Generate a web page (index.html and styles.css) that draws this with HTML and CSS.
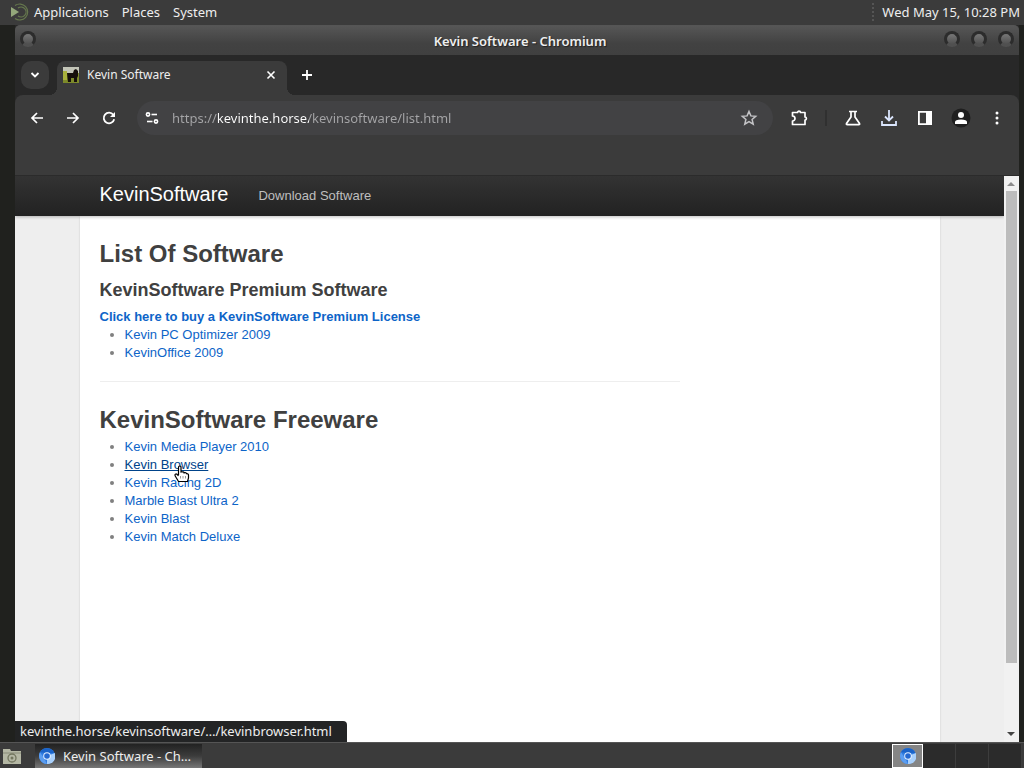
FILE: index.html
```html
<!DOCTYPE html>
<html lang="en">
<head>
    <meta charset="UTF-8">
    <meta name="viewport" content="width=device-width, initial-scale=1.0">
    <title>Kevin Software</title>
    <link rel="stylesheet" href="styles.css">
</head>
<body>
    <svg width="0" height="0" class="defs" aria-hidden="true">
        <symbol id="chromium" viewBox="0 0 16 16">
            <circle cx="8" cy="8" r="8" fill="#2f7be0"/>
            <path d="M8 8 16 5a8 8 0 0 1-8 11z" fill="#a9d0fb"/>
            <path d="M1 4.2 5 10l3 6A8 8 0 0 1 1 4.2z" fill="#5b9df0"/>
            <path d="M1 4.2A8 8 0 0 1 15.3 5H8z" fill="#1a63c8"/>
            <circle cx="8" cy="8" r="3.8" fill="#e4f0ff"/>
            <circle cx="8" cy="8" r="2.8" fill="#2568cf"/>
        </symbol>
    </svg>

    <header class="panel panel-top">
        <svg class="menu-logo" width="20" height="18" viewBox="0 0 20 18">
            <path d="M1 4v10l8-5z" fill="#93a77a"/>
            <path d="M5 2.5a8 8 0 1 1 0 13M8 5a5 5 0 1 1 0 8" fill="none" stroke="#66784e" stroke-width="1.2"/>
        </svg>
        <button class="menu">Applications</button>
        <button class="menu">Places</button>
        <button class="menu">System</button>
        <span class="grip"></span>
        <time class="clock">Wed May 15, 10:28 PM</time>
    </header>

    <main class="desktop">
        <section class="window">
            <div class="titlebar">
                <button class="orb" aria-label="Window menu"></button>
                <h1 class="window-title">Kevin Software - Chromium</h1>
                <div class="orbs">
                    <button class="orb" aria-label="Minimize"></button>
                    <button class="orb" aria-label="Maximize"></button>
                    <button class="orb" aria-label="Close"></button>
                </div>
            </div>

            <div class="tabstrip">
                <button class="tab-search" aria-label="Search tabs">
                    <svg width="10" height="8" viewBox="0 0 10 8"><path d="M1.5 2 5 5.5 8.5 2" fill="none" stroke="#fff" stroke-width="1.8"/></svg>
                </button>
                <div class="tab">
                    <svg width="16" height="16" viewBox="0 0 16 16">
                        <rect width="16" height="16" fill="#7d8a2a"/>
                        <rect width="16" height="6" fill="#c3c5b8"/>
                        <path d="M0 4h4v9H0z" fill="#a9b13c"/>
                        <path d="M4 6h6l1-3 2-1 2 2v5l-1 2v4h-3v-4H8v4H5z" fill="#160f0b"/>
                    </svg>
                    <span class="tab-title">Kevin Software</span>
                    <button class="icon-btn tab-close" aria-label="Close tab">
                        <svg width="10" height="10" viewBox="0 0 10 10"><path d="M1.5 1.5l7 7M8.5 1.5l-7 7" stroke="#fff" stroke-width="1.6"/></svg>
                    </button>
                </div>
                <button class="icon-btn new-tab" aria-label="New tab">
                    <svg width="12" height="12" viewBox="0 0 12 12"><path d="M6 1v10M1 6h10" stroke="#fff" stroke-width="1.8"/></svg>
                </button>
            </div>

            <div class="toolbar">
                <button class="icon-btn" aria-label="Back">
                    <svg width="16" height="16" viewBox="0 0 16 16"><path d="M14 8H3.500M8 3 3 8l5 5" fill="none" stroke="#fff" stroke-width="1.7"/></svg>
                </button>
                <button class="icon-btn" aria-label="Forward">
                    <svg width="16" height="16" viewBox="0 0 16 16"><path d="M2 8h10.500M8 3l5 5-5 5" fill="none" stroke="#fff" stroke-width="1.7"/></svg>
                </button>
                <button class="icon-btn" aria-label="Reload">
                    <svg width="16" height="16" viewBox="0 0 16 16"><path d="M13.200 9.200A5.300 5.300 0 1 1 12.300 4.800" fill="none" stroke="#fff" stroke-width="1.800"/><path d="M14 2v5H9z" fill="#fff"/></svg>
                </button>
                <div class="omnibox">
                    <svg width="16" height="16" viewBox="0 0 16 16" fill="none" stroke="#fff" stroke-width="1.600">
                        <circle cx="4" cy="4.500" r="1.600"/><path d="M7.500 4.500H13"/>
                        <circle cx="12" cy="11.500" r="1.600"/><path d="M3 11.500h5.500"/>
                    </svg>
                    <input class="url" type="text" value="https://kevinthe.horse/kevinsoftware/list.html" aria-label="Address">
                    <button class="icon-btn" aria-label="Bookmark this page">
                        <svg width="18" height="18" viewBox="0 0 18 18"><path d="M9 2.500l1.900 4.400 4.800.4-3.600 3.200 1.100 4.700L9 12.700l-4.200 2.500 1.100-4.700L2.300 7.300l4.800-.4z" fill="none" stroke="#c4c4c7" stroke-width="1.500"/></svg>
                    </button>
                </div>
                <div class="actions">
                    <button class="icon-btn" aria-label="Extensions">
                        <svg width="18" height="18" viewBox="0 0 18 18"><path d="M2.500 3.500H7.500a1.500 1.300 0 0 1 3 0h4.500V8a1.400 1.500 0 0 1 0 3v4.500H2.500V12a2.300 2.300 0 0 0 0-5z" fill="none" stroke="#fff" stroke-width="1.700" stroke-linejoin="round"/></svg>
                    </button>
                    <span class="divider"></span>
                    <button class="icon-btn" aria-label="Experiments">
                        <svg width="18" height="18" viewBox="0 0 18 18"><path d="M5 2.500h8M7 3v5l-4.500 6.500q-.5 1.200.8 1.200h11.400q1.300 0 .8-1.200L11 8V3" fill="none" stroke="#fff" stroke-width="1.700"/></svg>
                    </button>
                    <button class="icon-btn" aria-label="Downloads">
                        <svg width="18" height="18" viewBox="0 0 18 18"><path d="M9 1v10M5 7.500l4 4 4-4M2 12v4h14v-4" fill="none" stroke="#dbe6fd" stroke-width="1.800"/></svg>
                    </button>
                    <button class="icon-btn" aria-label="Side panel">
                        <svg width="16" height="16" viewBox="0 0 16 16"><path d="M1 1h14v14H1zM2.800 2.800v10.400H9V2.800z" fill="#fff" fill-rule="evenodd"/></svg>
                    </button>
                    <button class="icon-btn" aria-label="Profile">
                        <svg width="20" height="20" viewBox="0 0 20 20"><circle cx="10" cy="10" r="9.500" fill="#1f1f1f"/><circle cx="10" cy="7" r="3" fill="#fff"/><path d="M4 16v-2q0-2.500 6-2.500t6 2.500v2z" fill="#fff"/></svg>
                    </button>
                    <button class="icon-btn" aria-label="More">
                        <svg width="16" height="16" viewBox="0 0 16 16" fill="#fff"><circle cx="8" cy="3" r="1.500"/><circle cx="8" cy="8" r="1.500"/><circle cx="8" cy="13" r="1.500"/></svg>
                    </button>
                </div>
            </div>
            <div class="bookmarks"></div>

            <div class="viewport">
                <div class="page">
                    <nav class="navbar">
                        <div class="navbar-inner">
                            <a class="brand" href="#">KevinSoftware</a>
                            <a class="nav-link" href="#">Download Software</a>
                        </div>
                    </nav>
                    <article class="content">
                        <div class="column">
                            <h2>List Of Software</h2>
                            <h3>KevinSoftware Premium Software</h3>
                            <a class="premium" href="#">Click here to buy a KevinSoftware Premium License</a>
                            <ul>
                                <li><a href="#">Kevin PC Optimizer 2009</a></li>
                                <li><a href="#">KevinOffice 2009</a></li>
                            </ul>
                            <hr>
                            <h2>KevinSoftware Freeware</h2>
                            <ul>
                                <li><a href="#">Kevin Media Player 2010</a></li>
                                <li class="hovered">
                                    <a href="#">Kevin Browser</a>
                                    <svg class="cursor" width="16" height="18" viewBox="0 0 16 18"><path d="M4.500 10V2.500q0-1.500 1.300-1.500T7 2.500V7q3-.5 3 .8 2.300-.5 2.500.9 2-.2 2 1.300v3l-1 3.500H4.500l-3-5q-1.200-2 .3-2.500 1-.3 2.700 2" fill="#fff" stroke="#000" stroke-width="1.200"/><path d="M6.500 11v2.500M9 11v2.500M11.500 11v2.500" stroke="#999"/></svg>
                                </li>
                                <li><a href="#">Kevin Racing 2D</a></li>
                                <li><a href="#">Marble Blast Ultra 2</a></li>
                                <li><a href="#">Kevin Blast</a></li>
                                <li><a href="#">Kevin Match Deluxe</a></li>
                            </ul>
                        </div>
                    </article>
                </div>
                <div class="scrollbar">
                    <svg width="14" height="15" viewBox="0 0 14 15"><path d="M3 10h8L7 6z" fill="#8b8b8b"/></svg>
                    <div class="thumb"></div>
                    <svg width="14" height="15" viewBox="0 0 14 15"><path d="M3 5h8L7 9z" fill="#444"/></svg>
                </div>
                <div class="status">kevinthe.horse/kevinsoftware/…/kevinbrowser.html</div>
            </div>
        </section>
    </main>

    <footer class="panel panel-bottom">
        <button class="icon-btn show-desktop" aria-label="Show desktop">
            <svg width="20" height="18" viewBox="0 0 20 18">
                <path d="M1 2h7l1 2h10v13H1z" fill="#b4b7a4"/>
                <path d="M1 6h18" stroke="#888b79"/>
                <circle cx="10" cy="11" r="4" fill="none" stroke="#73765f" stroke-width="1.300"/>
                <circle cx="10" cy="11" r="1.500" fill="#73765f"/>
            </svg>
        </button>
        <button class="task">
            <svg width="16" height="16"><use href="#chromium"/></svg>
            <span>Kevin Software - Ch…</span>
        </button>
        <div class="workspaces">
            <button class="workspace active" aria-label="Workspace 1"><svg width="16" height="16"><use href="#chromium"/></svg></button>
            <button class="workspace" aria-label="Workspace 2"></button>
            <button class="workspace" aria-label="Workspace 3"></button>
            <button class="workspace" aria-label="Workspace 4"></button>
        </div>
    </footer>
</body>
</html>
```
FILE: styles.css
```css
* {
    box-sizing: border-box;
}
body {
    margin: 0;
    height: 100vh;
    display: flex;
    flex-direction: column;
    overflow: hidden;
    background: #20211e;
    color: #eee;
    font: 13px/18px "Noto Sans", sans-serif;
}
button {
    padding: 0;
    border: none;
    background: none;
    color: inherit;
    font: inherit;
}
svg {
    display: block;
    flex: none;
}
.defs {
    position: absolute;
}

/* desktop panels */
.panel {
    display: flex;
    align-items: center;
    flex: none;
    background: #3b3b3b;
}
.panel-top {
    height: 25px;
    padding: 0 4px 2px 10px;
}
.menu-logo {
    margin-right: 4px;
}
.menu {
    margin-right: 13px;
}
.grip {
    height: 18px;
    margin-left: auto;
    margin-right: 8px;
    border-left: 2px dotted #555;
}
.panel-bottom {
    height: 26px;
    border-top: 1px solid #555;
    padding: 0 2px;
}
.show-desktop {
    margin-right: 13px;
}
.panel-bottom .show-desktop {
    width: 20px;
}
.task {
    display: flex;
    align-items: center;
    gap: 8px;
    width: 167px;
    height: 24px;
    padding: 0 4px;
    white-space: nowrap;
    background: linear-gradient(#222, #3c3c3c 50%, #777);
}
.workspaces {
    display: flex;
    margin-left: auto;
    height: 24px;
}
.workspace {
    display: flex;
    align-items: center;
    justify-content: center;
    width: 33px;
    background: #2b2b2b;
    border-right: 1px solid #3d3d3d;
}
.workspace.active {
    width: 31px;
    background: #858585;
    border: 1px solid #fff;
}

/* browser window */
.desktop {
    display: flex;
    flex: 1;
    min-height: 0;
    padding: 0 5px 0 15px;
}
.window {
    display: flex;
    flex-direction: column;
    flex: 1;
    min-width: 0;
    background: #282828;
}
.titlebar {
    display: flex;
    align-items: center;
    justify-content: space-between;
    flex: none;
    height: 30px;
    padding: 0 5px;
    border-top: 1px solid #555;
    border-radius: 5px 5px 0 0;
    background: linear-gradient(#565656, #424242 60%, #404040);
}
.window-title {
    margin: 0 0 0 60px;
    font-size: 13px;
    font-weight: 600;
    text-shadow: 1px 1px 1px #222;
}
.orbs {
    display: flex;
    gap: 11px;
}
.orb {
    width: 16px;
    height: 16px;
    margin-bottom: 4px;
    border: 3px solid #2c2c2c;
    border-bottom-color: #505050;
    border-radius: 50%;
    background: linear-gradient(#777, #505050);
}
.tabstrip {
    display: flex;
    align-items: center;
    flex: none;
    height: 40px;
    padding-left: 6px;
}
.tab-search {
    display: flex;
    align-items: center;
    justify-content: center;
    width: 28px;
    height: 28px;
    border-radius: 10px;
    background: #3b3b3b;
}
.tab {
    position: relative;
    display: flex;
    align-items: center;
    align-self: flex-end;
    gap: 8px;
    width: 230px;
    height: 34px;
    margin-left: 8px;
    padding: 0 8px 6px 6px;
    border-radius: 8px 8px 0 0;
    background: #3b3b3b;
}
.tab::before,
.tab::after {
    content: "";
    position: absolute;
    bottom: 0;
    width: 8px;
    height: 8px;
}
.tab::before {
    right: 100%;
    background: radial-gradient(circle at 0 0, transparent 8px, #3b3b3b 8px);
}
.tab::after {
    left: 100%;
    background: radial-gradient(circle at 100% 0, transparent 8px, #3b3b3b 8px);
}
.tab-title {
    flex: 1;
    font-size: 12px;
}
.icon-btn {
    display: flex;
    align-items: center;
    justify-content: center;
    width: 16px;
    height: 20px;
}
.new-tab {
    margin-left: 12px;
}
.toolbar {
    display: flex;
    align-items: center;
    flex: none;
    gap: 20px;
    height: 46px;
    padding: 0 14px;
    border-radius: 8px 8px 0 0;
    background: #3b3b3b;
}
.omnibox {
    display: flex;
    align-items: center;
    flex: 1;
    gap: 12px;
    height: 34px;
    margin-right: -2px;
    padding: 0 16px 0 7px;
    border-radius: 17px;
    background: #424244;
}
/* host name is brighter than the rest of the address */
.url {
    flex: 1;
    min-width: 0;
    padding: 0;
    border: none;
    outline: none;
    font: inherit;
    color: transparent;
    background: linear-gradient(to right, #a5a5a7 46px, #fff 46px 137px, #a5a5a7 137px);
    -webkit-background-clip: text;
    background-clip: text;
}
.actions {
    display: flex;
    align-items: center;
    gap: 20px;
}
.divider {
    width: 2px;
    height: 16px;
    margin: 0 -2px;
    background: #303030;
}
.bookmarks {
    flex: none;
    height: 35px;
    background: #3b3b3b;
    border-bottom: 1px solid #2b2b2b;
}

/* web page */
.viewport {
    position: relative;
    display: flex;
    flex: 1;
    min-height: 0;
}
.page {
    display: flex;
    flex-direction: column;
    flex: 1;
    min-width: 0;
    overflow: hidden;
    background: #eee;
    color: #808080;
    font-family: "Liberation Sans", Arial, sans-serif;
}
.page a {
    color: #0d64c8;
    text-decoration: none;
}
.navbar {
    position: relative;
    flex: none;
    height: 40px;
    background: linear-gradient(#333, #222);
    box-shadow: 0 1px 3px rgba(0, 0, 0, 0.25);
}
.navbar-inner {
    display: flex;
    align-items: center;
    gap: 30px;
    max-width: 860px;
    height: 40px;
    margin: 0 auto;
    padding: 0 20px;
}
.navbar .brand {
    padding-bottom: 4px;
    color: #fff;
    font-size: 20px;
}
.navbar .nav-link {
    color: #bfbfbf;
}
.content {
    flex: 1;
    width: 100%;
    max-width: 860px;
    margin: 0 auto;
    padding: 20px;
    background: #fff;
    box-shadow: 0 1px 2px rgba(0, 0, 0, 0.15);
}
.column {
    max-width: 580px;
}
h2,
h3 {
    margin: 0;
    color: #404040;
    line-height: 36px;
}
h2 {
    font-size: 24px;
}
h3 {
    font-size: 18px;
}
.premium {
    display: block;
    font-weight: bold;
}
ul {
    margin: 0 0 18px 25px;
    padding: 0;
}
hr {
    margin: 19px 0 20px;
    border: none;
    border-bottom: 1px solid #eee;
}
.hovered {
    position: relative;
}
.page .hovered a {
    color: #00438a;
    text-decoration: underline;
}
.cursor {
    position: absolute;
    top: 9px;
    left: 49px;
}
.scrollbar {
    display: flex;
    flex-direction: column;
    flex: none;
    width: 15px;
    background: #f1f1f1;
}
.thumb {
    flex: 1;
    margin: 0 2px 64px;
    background: #bcbcbc;
}
.status {
    position: absolute;
    left: 0;
    bottom: 0;
    width: 332px;
    height: 21px;
    padding: 1px 5px;
    border-radius: 0 4px 0 0;
    background: #232425;
    white-space: nowrap;
}
```
